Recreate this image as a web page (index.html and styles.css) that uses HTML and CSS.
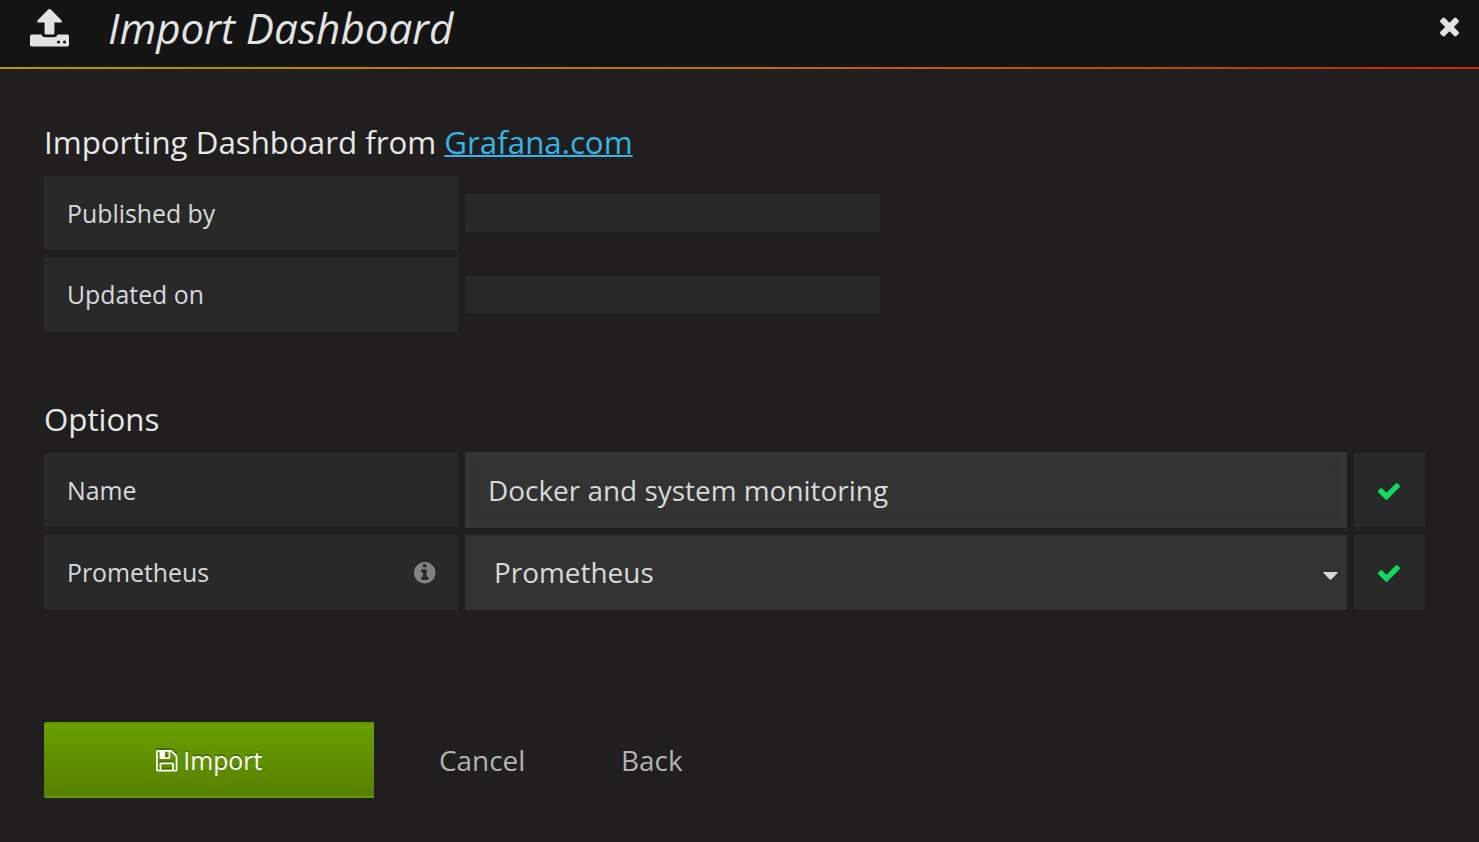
FILE: index.html
```html
<!DOCTYPE html>
<html lang="en">
<head>
<meta charset="utf-8">
<title>Import Dashboard</title>
<link rel="stylesheet" href="styles.css">
</head>
<body>
<svg class="defs" width="0" height="0" aria-hidden="true">
  <symbol id="check" viewBox="121 334 1550 1188"><path d="M1671 566q0 40-28 68l-724 724-136 136q-28 28-68 28t-68-28l-136-136-362-362q-28-28-28-68t28-68l136-136q28-28 68-28t68 28l294 295 656-657q28-28 68-28t68 28l136 136q28 28 28 68z"/></symbol>
</svg>
<header class="modal-header">
  <svg class="upload-icon" viewBox="0 0 39 38"><path fill-rule="evenodd" d="M19.5 0Q20.2 0 20.8.6L31.4 11.300Q32.400 12.500 31.500 13.400H24.400V24.500Q24.400 25.500 23.400 25.500H15.600Q14.600 25.500 14.600 24.500V13.400H7.600Q6.700 12.500 7.700 11.300L18.200.6Q18.800 0 19.500 0ZM1.800 25.500H11.500Q12.200 28.300 15 28.300H24Q26.800 28.300 27.500 25.500H37.300Q39 25.500 39 27.200V35.700Q39 37.500 37.300 37.500H1.800Q0 37.500 0 35.700V27.200Q0 25.500 1.800 25.500ZM28.500 31.400A1.600 1.600 0 1 0 28.500 34.600 1.600 1.600 0 1 0 28.500 31.400ZM34.500 31.400A1.600 1.600 0 1 0 34.500 34.600 1.600 1.600 0 1 0 34.500 31.400Z"/></svg>
  <h2 class="modal-title">Import Dashboard</h2>
  <svg class="close-icon" viewBox="302 302 1188 1188"><path d="M1490 1322q0 40-28 68l-136 136q-28 28-68 28t-68-28l-294-294-294 294q-28 28-68 28t-68-28l-136-136q-28-28-28-68t28-68l294-294-294-294q-28-28-28-68t28-68l136-136q28-28 68-28t68 28l294 294 294-294q28-28 68-28t68 28l136 136q28 28 28 68t-28 68l-294 294 294 294q28 28 28 68z" transform="translate(0 -32)"/></svg>
</header>
<main class="modal-content">
  <section class="source">
    <h3 class="section-heading">Importing Dashboard from <a class="link" href="#">Grafana.com</a></h3>
    <div class="row"><span class="label">Published by</span><span class="blank"></span></div>
    <div class="row row-tall"><span class="label">Updated on</span><span class="blank"></span></div>
  </section>
  <section class="options">
    <h3 class="section-heading">Options</h3>
    <div class="row"><label class="label" for="name">Name</label><input class="field name-input" id="name" value="Docker and system monitoring"><span class="status"><svg class="check-icon"><use href="#check"/></svg></span></div>
    <div class="row row-tall row-last"><span class="label">Prometheus<svg class="info-icon" viewBox="128 128 1536 1536"><path d="M1152 1376v-160q0-14-9-23t-23-9h-96v-512q0-14-9-23t-23-9h-320q-14 0-23 9t-9 23v160q0 14 9 23t23 9h96v320h-96q-14 0-23 9t-9 23v160q0 14 9 23t23 9h448q14 0 23-9t9-23zm-128-896v-160q0-14-9-23t-23-9h-192q-14 0-23 9t-9 23v160q0 14 9 23t23 9h192q14 0 23-9t9-23zm640 416q0 209-103 385.500t-279.500 279.500-385.500 103-385.500-103-279.500-279.500-103-385.500 103-385.500 279.500-279.500 385.500-103 385.500 103 279.500 279.500 103 385.500z"/></svg></span><div class="field select">Prometheus<svg class="caret" viewBox="0 0 15 8"><path d="M.8 0H14.200Q15.200.2 14.500 1L8.200 7.400Q7.500 8 6.800 7.400L.5 1Q-.2.2.8 0Z"/></svg></div><span class="status"><svg class="check-icon"><use href="#check"/></svg></span></div>
  </section>
  <div class="actions">
    <button class="import-button"><svg class="save-icon" viewBox="128 128 1536 1536"><path d="M512 1536h768v-384h-768v384zm896 0h128v-896q0-14-10-38.500t-20-34.500l-281-281q-10-10-34-20t-39-10v416q0 40-28 68t-68 28h-576q-40 0-68-28t-28-68v-416h-128v1280h128v-416q0-40 28-68t68-28h832q40 0 68 28t28 68v416zm-384-928v-320q0-13-9.500-22.500t-22.500-9.500h-192q-13 0-22.500 9.500t-9.500 22.500v320q0 13 9.500 22.500t22.500 9.500h192q13 0 22.500-9.500t9.500-22.500zm640 32v928q0 40-28 68t-68 28h-1344q-40 0-68-28t-28-68v-1344q0-40 28-68t68-28h928q40 0 88 20t76 48l280 280q28 28 48 76t20 88z"/></svg>Import</button>
    <a class="action-link">Cancel</a>
    <a class="action-link">Back</a>
  </div>
</main>
</body>
</html>
```

FILE: styles.css
```css
* { box-sizing: border-box; }
body {
  margin: 0;
  height: 842px;
  overflow: hidden;
  background: #201e1f;
  color: #d8d9da;
  font-family: "Open Sans", sans-serif;
}
svg { display: block; flex: none; fill: currentColor; overflow: visible; }
.defs { position: absolute; }
.modal-header {
  display: flex;
  align-items: flex-start;
  height: 69px;
  padding: 0 20.5px 0 30px;
  background: #141414;
  border-bottom: 2px solid;
  border-image: linear-gradient(to right, #b89403, #c06c08 50%, #b83a0c 90%, #b8340c) 1;
  color: #e3e3e3;
}
.upload-icon { width: 39px; height: 38px; margin-top: 9px; }
.modal-title {
  margin: 0 auto 0 39px;
  font-size: 42.200px;
  line-height: 56px;
  font-weight: 400;
  font-style: italic;
}
.close-icon { width: 19px; height: 19px; margin-top: 17px; }
.modal-content { padding: 52px 54px 0 44px; }
.section-heading {
  margin: 0;
  height: 55px;
  font-size: 31.270px;
  line-height: 42px;
  font-weight: 400;
  color: #e7e7e7;
}
.link { color: #33b5e5; text-decoration: underline; text-decoration-thickness: 2px; }
.row { display: flex; gap: 7px; height: 74px; margin-bottom: 7px; align-items: center; }
.row-tall { height: 75px; }
.label {
  display: flex;
  align-items: center;
  justify-content: space-between;
  width: 414px;
  height: 100%;
  padding: 0 23px;
  border-radius: 2px 0 0 2px;
  background: #292929;
  font-size: 24.850px;
}
.row-tall .label { padding-bottom: 1px; }
.blank { width: 415px; height: 38px; border-radius: 2px 0 0 2px; background: #292929; }
.row-tall .blank { height: 37px; }
.options { margin-top: 66px; }
.options .row { margin-bottom: 8px; }
.info-icon { width: 21.500px; height: 21.500px; margin-top: 1px; color: #828282; }
.field { width: 882px; height: 100%; background: #333; font: 27.930px "Open Sans", sans-serif; color: #d8d9da; }
.name-input {
  height: 76px;
  padding: 0 21px;
  border: 2px solid #363636;
  border-radius: 0 2px 2px 0;
  outline: none;
  box-shadow: inset 0 0 10px #393939;
}
.select { display: flex; align-items: center; justify-content: space-between; padding: 0 9.500px 1px 29px; }
.caret { width: 15px; height: 8px; margin-top: 8px; color: #d8d9da; }
.status {
  display: flex;
  align-items: center;
  justify-content: center;
  width: 71px;
  height: 100%;
  padding-right: 1px;
  border-radius: 2px 0 0 2px;
  background: #292929;
  color: #10d95b;
}
.row-tall .status { padding-bottom: 1px; }
.check-icon { width: 22px; height: 17px; margin-top: 3px; }
.actions { display: flex; align-items: center; height: 76px; margin-top: 112px; }
.import-button {
  display: flex;
  align-items: center;
  justify-content: center;
  gap: 6px;
  width: 330px;
  height: 76px;
  margin-right: 17px;
  padding: 0;
  border: 0;
  border-radius: 2px 0 0 2px;
  background: linear-gradient(#5f9500 0 2px, transparent 2px 74px, #629900 74px), linear-gradient(#6aa100, #567f00);
  color: #fff;
  font: 24.850px "Open Sans", sans-serif;
  text-shadow: 0 -2px 0 rgba(0, 0, 0, .25);
}
.save-icon { width: 21.500px; height: 21.500px; margin-top: 1px; filter: drop-shadow(0 -2px 0 rgba(0, 0, 0, .25)); }
.action-link { padding: 0 47.700px 0 48px; font-size: 27.930px; line-height: 38px; color: #b3b3b3; }
```
